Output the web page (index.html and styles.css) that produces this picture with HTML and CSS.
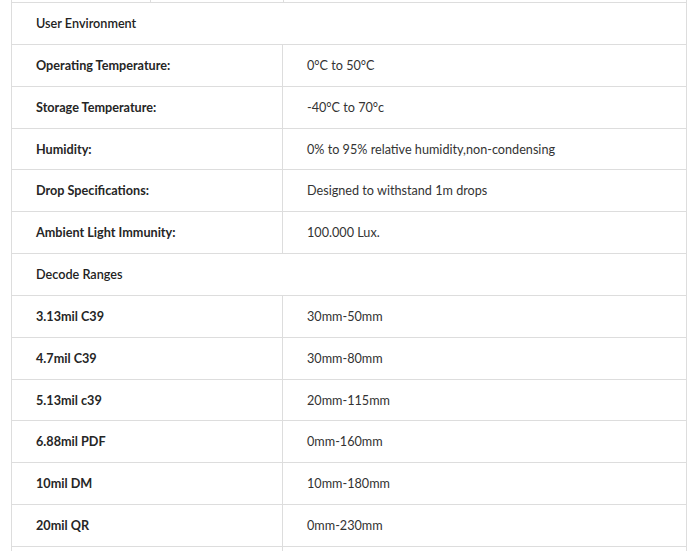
FILE: index.html
```html
<!DOCTYPE html>
<html lang="en">
<head>
<meta charset="utf-8">
<title>Specifications</title>
<link rel="stylesheet" href="styles.css">
</head>
<body>
<div class="page">
  <div class="prev-row">
    <div class="prev-cell c1"></div>
    <div class="prev-cell c2"></div>
    <div class="prev-cell c3"></div>
  </div>
  <table class="spec">
    <colgroup>
      <col class="col-label">
      <col class="col-value">
    </colgroup>
    <tbody>
      <tr class="section"><td colspan="2">User Environment</td></tr>
      <tr><td class="label">Operating Temperature:</td><td class="value">0°C to 50°C</td></tr>
      <tr><td class="label">Storage Temperature:</td><td class="value">-40°C to 70°c</td></tr>
      <tr><td class="label">Humidity:</td><td class="value">0% to 95% relative humidity,non-condensing</td></tr>
      <tr><td class="label">Drop Specifications:</td><td class="value">Designed to withstand 1m drops</td></tr>
      <tr><td class="label">Ambient Light Immunity:</td><td class="value">100.000 Lux.</td></tr>
      <tr class="section"><td colspan="2">Decode Ranges</td></tr>
      <tr><td class="label">3.13mil C39</td><td class="value">30mm-50mm</td></tr>
      <tr><td class="label">4.7mil C39</td><td class="value">30mm-80mm</td></tr>
      <tr><td class="label">5.13mil c39</td><td class="value">20mm-115mm</td></tr>
      <tr><td class="label">6.88mil PDF</td><td class="value">0mm-160mm</td></tr>
      <tr><td class="label">10mil DM</td><td class="value">10mm-180mm</td></tr>
      <tr><td class="label">20mil QR</td><td class="value">0mm-230mm</td></tr>
      <tr><td class="label">&nbsp;</td><td class="value">&nbsp;</td></tr>
    </tbody>
  </table>
</div>
</body>
</html>
```

FILE: styles.css
```css
html, body {
  margin: 0;
  padding: 0;
  background: #ffffff;
}

body {
  font-family: Lato, "Open Sans", "Liberation Sans", sans-serif;
  font-size: 12.65px;
  color: #333333;
  overflow: hidden;
}

.page {
  padding-left: 11px;
  width: 676px;
}

.prev-row {
  display: flex;
  height: 2px;
  border-left: 1px solid #dddddd;
  border-right: 1px solid #dddddd;
}

.prev-cell {
  height: 2px;
}

.prev-cell.c1 {
  width: 138px;
  border-right: 1px solid #dddddd;
}

.prev-cell.c2 {
  width: 132px;
  border-right: 1px solid #dddddd;
}

.prev-cell.c3 {
  flex: 1;
}

.spec {
  width: 676px;
  border-collapse: collapse;
  table-layout: fixed;
}

.col-label {
  width: 271px;
}

.spec td {
  border: 1px solid #dddddd;
  padding: 13px 24px 11px;
  line-height: 16.85px;
  vertical-align: middle;
  text-align: left;
}

.spec td.label {
  font-weight: 700;
  color: #262626;
}

.spec td.value {
  font-weight: 400;
  color: #333333;
}

.spec tr.section td {
  font-weight: 600;
  color: #222222;
}
```
